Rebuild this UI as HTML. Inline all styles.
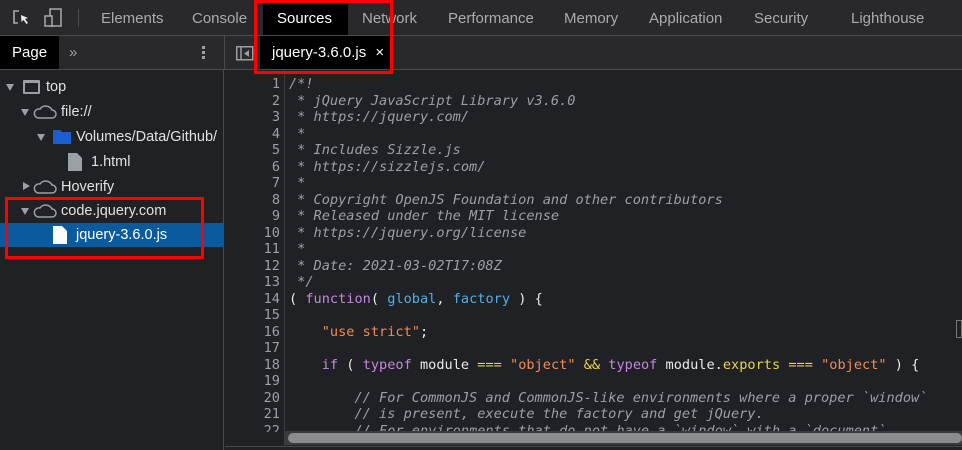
<!DOCTYPE html>
<html><head><meta charset="utf-8"><style>
*{margin:0;padding:0;box-sizing:border-box}
body{width:962px;height:450px;overflow:hidden;background:#202124;font-family:"Liberation Sans",Arial,sans-serif;position:relative;color:#e8eaed}
.abs{position:absolute}
.top{left:0;top:0;width:962px;height:36px;background:#29292c;border-bottom:1px solid #4a4a4e}
.tab{position:absolute;top:0;height:36px;line-height:37px;font-size:15px;color:#a8abb0}
.row2{left:0;top:36px;width:962px;height:34px;background:#29292c;border-bottom:1px solid #4a4a4e}
.left{left:0;top:70px;width:224px;height:380px;background:#202124;border-right:1px solid #4a4a4e}
.tr{position:absolute;left:0;height:25px;width:224px;font-size:14.5px;color:#e0e2e5;line-height:26px;white-space:nowrap}
.tri{position:absolute;width:0;height:0;border-left:4.5px solid transparent;border-right:4.5px solid transparent;border-top:7px solid #9aa0a6;top:10px}
.trr{position:absolute;width:0;height:0;border-top:4.5px solid transparent;border-bottom:4.5px solid transparent;border-left:7px solid #9aa0a6;top:8px}
.code{left:226px;top:76px;width:736px;height:356px;overflow:hidden;font-family:"DejaVu Sans Mono","Liberation Mono",monospace;font-size:13.6px;line-height:16.5px}
.ln{position:absolute;left:0;width:54px;text-align:right;color:#9aa0a6}
.gut{left:284px;top:70px;width:1px;height:376px;background:#3c3c3f}
.tx{position:absolute;left:63px;white-space:pre;color:#e8eaed}
.c{color:#9aa0a6;font-style:italic}
.k{color:#c586e0}.v{color:#4fb0e6}.s{color:#f28b54}.o{color:#e8d44d}
</style></head><body>
<div class="abs top">
 <svg class="abs" style="left:12px;top:9px" width="20" height="18" viewBox="0 0 20 18"><path d="M7 2H2v12h4" fill="none" stroke="#a8abb0" stroke-width="1.6"/><path d="M9 6l7 3-3 1 3 4-1.5 1-3-4-2 2z" fill="#e8eaed"/></svg>
 <svg class="abs" style="left:44px;top:8px" width="22" height="20" viewBox="0 0 22 20"><rect x="6" y="1" width="11" height="17" fill="none" stroke="#a8abb0" stroke-width="1.5"/><rect x="1" y="8" width="7" height="10" fill="#29292c" stroke="#a8abb0" stroke-width="1.5"/></svg>
 <div class="abs" style="left:78px;top:9px;width:1px;height:18px;background:#4a4a4e"></div>
 <div class="tab" style="left:101px">Elements</div>
 <div class="tab" style="left:192px">Console</div>
 <div class="tab" style="left:263px;width:85px;height:35px;background:#000;color:#fff;padding-left:14px">Sources</div>
 <div class="tab" style="left:362px">Network</div>
 <div class="tab" style="left:448px">Performance</div>
 <div class="tab" style="left:564px">Memory</div>
 <div class="tab" style="left:649px">Application</div>
 <div class="tab" style="left:754px">Security</div>
 <div class="tab" style="left:851px">Lighthouse</div>
</div>
<div class="abs row2">
 <div class="abs" style="left:0;top:0;width:59px;height:33px;background:#000;color:#fff;font-size:15px;line-height:34px;padding-left:12px">Page</div>
 <div class="abs" style="left:69px;top:0;color:#9aa0a6;font-size:15px;line-height:33px">»</div>
 <div class="abs" style="left:202px;top:10px;width:3px;height:3px;background:#9aa0a6;box-shadow:0 5px 0 #9aa0a6,0 10px 0 #9aa0a6"></div>
 <div class="abs" style="left:224px;top:0;width:1px;height:34px;background:#4a4a4e"></div>
 <svg class="abs" style="left:236px;top:10px" width="18" height="15" viewBox="0 0 18 15"><rect x="0.75" y="0.75" width="16" height="13" fill="none" stroke="#9aa0a6" stroke-width="1.5"/><path d="M5 1v13" stroke="#9aa0a6" stroke-width="1.5"/><path d="M13 4v7l-5-3.5z" fill="#9aa0a6"/></svg>
 <div class="abs" style="left:260px;top:0;width:131px;height:33px;background:#000;color:#fff;font-size:15px;line-height:33px;padding-left:12px">jquery-3.6.0.js <span style="margin-left:5px">×</span></div>
</div>
<div class="abs left">
 <div class="tr" style="top:4px"><div class="tri" style="left:6px"></div><div class="abs" style="left:23px;top:6px;width:17px;height:14px;border:2px solid #9aa0a6;border-top-width:3px;border-radius:1px"></div><span class="abs" style="left:46px">top</span></div>
 <div class="tr" style="top:29px"><div class="tri" style="left:21px"></div><svg class="abs" style="left:33px;top:6px" width="24" height="14" viewBox="0 0 24 14"><path d="M5 13H19a4 4 0 0 0 0-8 7 7 0 0 0-12-1A4.5 4.5 0 0 0 5 13z" fill="none" stroke="#9aa0a6" stroke-width="1.5"/></svg><span class="abs" style="left:61px">file://</span></div>
 <div class="tr" style="top:54px"><div class="tri" style="left:37px"></div><svg class="abs" style="left:53px;top:6px" width="18" height="14" viewBox="0 0 18 14"><path d="M0 0h7l2 2h9v12H0z" fill="#1a5fd0"/></svg><span class="abs" style="left:76px">Volumes/Data/Github/</span></div>
 <div class="tr" style="top:79px"><svg class="abs" style="left:68px;top:4px" width="14" height="18" viewBox="0 0 14 18"><path d="M0 0h9l5 5v13H0z" fill="#9aa0a6"/></svg><span class="abs" style="left:91px">1.html</span></div>
 <div class="tr" style="top:104px"><div class="trr" style="left:23px"></div><svg class="abs" style="left:33px;top:6px" width="24" height="14" viewBox="0 0 24 14"><path d="M5 13H19a4 4 0 0 0 0-8 7 7 0 0 0-12-1A4.5 4.5 0 0 0 5 13z" fill="none" stroke="#9aa0a6" stroke-width="1.5"/></svg><span class="abs" style="left:61px">Hoverify</span></div>
 <div class="tr" style="top:128px"><div class="tri" style="left:21px"></div><svg class="abs" style="left:33px;top:6px" width="24" height="14" viewBox="0 0 24 14"><path d="M5 13H19a4 4 0 0 0 0-8 7 7 0 0 0-12-1A4.5 4.5 0 0 0 5 13z" fill="none" stroke="#9aa0a6" stroke-width="1.5"/></svg><span class="abs" style="left:61px">code.jquery.com</span></div>
 <div class="tr" style="top:153px;height:24px;background:#0c5a9e;line-height:25px"><svg class="abs" style="left:53px;top:3px" width="14" height="18" viewBox="0 0 14 18"><path d="M0 0h9l5 5v13H0z" fill="#fff"/></svg><span class="abs" style="left:76px;color:#fff">jquery-3.6.0.js</span></div>
</div>
<div class="abs gut"></div>
<div class="abs code">
<div class="ln" style="top:0">1<br>2<br>3<br>4<br>5<br>6<br>7<br>8<br>9<br>10<br>11<br>12<br>13<br>14<br>15<br>16<br>17<br>18<br>19<br>20<br>21<br>22<br>23</div>
<div class="tx" style="top:0"><span class="c">/*!
 * jQuery JavaScript Library v3.6.0
 * https://jquery.com/
 *
 * Includes Sizzle.js
 * https://sizzlejs.com/
 *
 * Copyright OpenJS Foundation and other contributors
 * Released under the MIT license
 * https://jquery.org/license
 *
 * Date: 2021-03-02T17:08Z
 */</span>
( <span class="k">function</span>( <span class="v">global</span>, <span class="v">factory</span> ) {

    <span class="s">"use strict"</span>;

    <span class="k">if</span> ( <span class="k">typeof</span> module <span class="o">===</span> <span class="s">"object"</span> <span class="o">&amp;&amp;</span> <span class="k">typeof</span> module.<span class="o">exports</span> <span class="o">===</span> <span class="s">"object"</span> ) {

        <span class="c">// For CommonJS and CommonJS-like environments where a proper `window`
        // is present, execute the factory and get jQuery.
        // For environments that do not have a `window` with a `document`</span></div>
</div>
<div class="abs" style="left:285px;top:431px;width:677px;height:14px;background:#3a3b3e"></div>
<div class="abs" style="left:288px;top:433px;width:674px;height:10px;background:#8a8c90;border-radius:5px"></div>
<div class="abs" style="left:225px;top:446px;width:737px;height:1px;background:#4a4a4e"></div>
<div class="abs" style="left:956px;top:320px;width:6px;height:18px;border:1px solid #777;background:#202124"></div>
<div class="abs" style="left:254px;top:0;width:139px;height:74px;border:3px solid #f00"></div>
<div class="abs" style="left:5px;top:197px;width:199px;height:62px;border:3px solid #f00"></div>
</body></html>
